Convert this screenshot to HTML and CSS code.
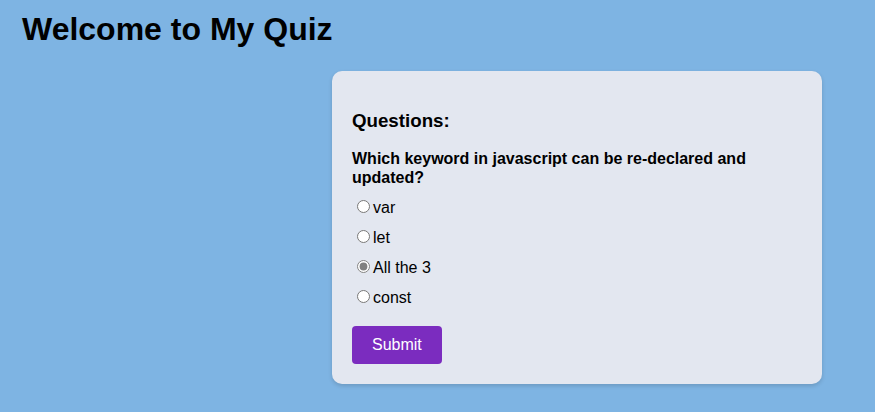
FILE: index.html
```html
<!DOCTYPE html>
<html>
<head>
<meta charset="utf-8">
<link rel="stylesheet" href="styles.css">
</head>
<body>
<h1 class="title">Welcome to My Quiz</h1>
<div class="wrap">
  <div class="card">
    <h3 class="heading">Questions:</h3>
    <p class="question">Which keyword in javascript can be re-declared and updated?</p>
    <label class="option"><input type="radio" name="q">var</label>
    <label class="option"><input type="radio" name="q">let</label>
    <label class="option"><input type="radio" name="q" checked>All the 3</label>
    <label class="option"><input type="radio" name="q">const</label>
    <button class="submit">Submit</button>
  </div>
</div>
</body>
</html>
```
FILE: styles.css
```css
html, body {
  margin: 0;
  padding: 0;
}
body {
  background: #7eb4e3;
  font-family: "Liberation Sans", Arial, sans-serif;
  color: #000;
  height: 412px;
  overflow: hidden;
}
.title {
  font-size: 32px;
  margin: 0;
  padding: 11px 22px 0;
  line-height: 37px;
}
.wrap {
  display: flex;
  padding: 23px 0 0 332px;
}
.card {
  width: 450px;
  padding: 20px;
  background: #e3e7f0;
  border-radius: 10px;
  box-shadow: 0 2px 4px rgba(0, 0, 0, 0.15);
  display: flex;
  flex-direction: column;
  align-items: flex-start;
}
.heading {
  font-size: 18.72px;
  margin: 18.72px 0 18.72px;
}
.question {
  font-size: 16px;
  font-weight: bold;
  margin: 0 0 10px;
  line-height: 18.4px;
}
.option {
  font-size: 16px;
  display: block;
  margin-bottom: 9.8px;
}
.option input {
  margin: 3px 3px 0 5px;
  accent-color: #808080;
}
.submit {
  margin-top: 10px;
  background: #7b2cbf;
  color: #fff;
  border: none;
  border-radius: 4px;
  font-family: "Liberation Sans", Arial, sans-serif;
  font-size: 16px;
  padding: 10px 20px;
  line-height: 18px;
}
```
